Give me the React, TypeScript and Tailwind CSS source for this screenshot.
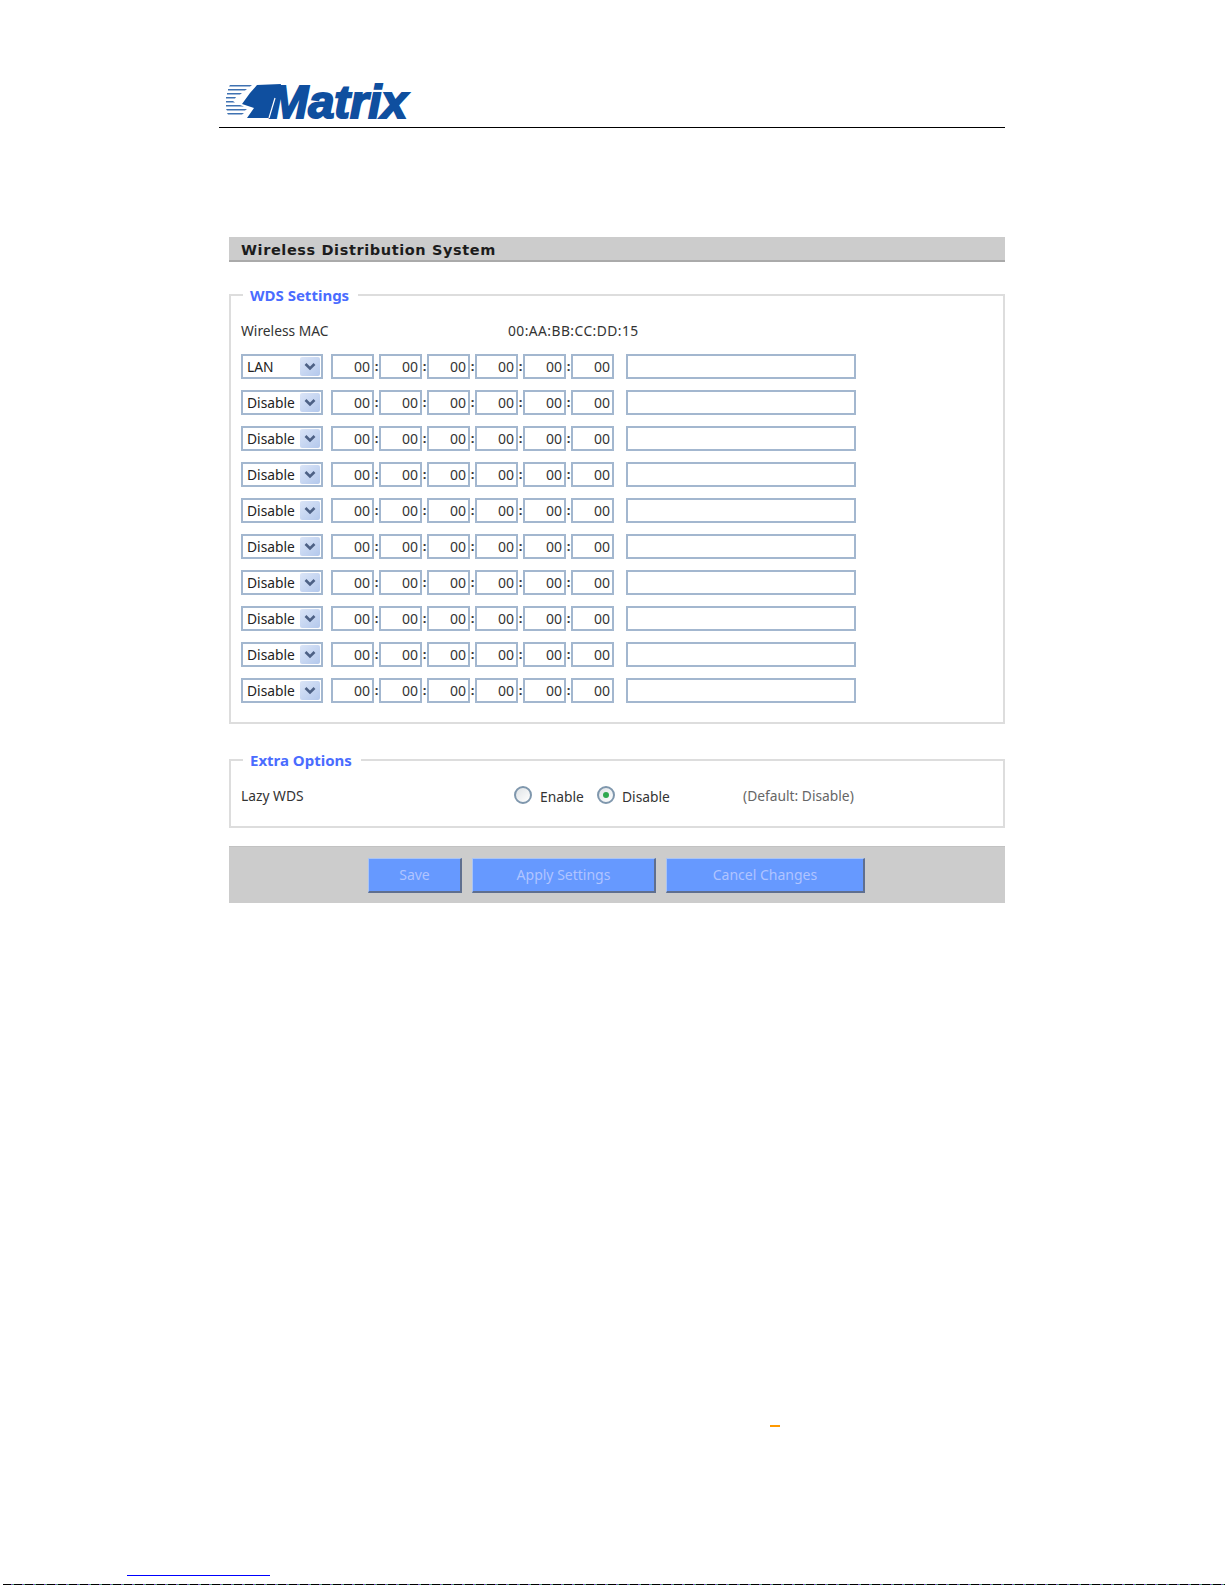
const ui = '"Noto Sans", "Liberation Sans", sans-serif';
const rows = ['LAN', 'Disable', 'Disable', 'Disable', 'Disable', 'Disable', 'Disable', 'Disable', 'Disable', 'Disable'];
const octets = [0, 1, 2, 3, 4, 5];

function Logo() {
  return (
    <svg width="200" height="60" viewBox="0 -20 200 60" className="block">
      <g fill="#0f4f9f">
        <path d="M5 4H27L25 5.5H4ZM3 8H22L20 9.5H3ZM2 12H17L15 13.5H2ZM1 16H11L10 17.5H1ZM1 20H8L10 21.5H1ZM1 24H15L19 25.5H1ZM1 28H22L20 29.5H2ZM2 32H19L17 33.5H3Z" opacity="0.8" />
        <path d="M32 4L56 3L48 37H22L29 27L17 23L25 12Z" />
        <text x="44" y="37" fontFamily='"Liberation Sans", sans-serif' fontWeight="700" fontStyle="italic" fontSize="47" stroke="#0f4f9f" strokeWidth="2">Matrix</text>
      </g>
      <path d="M44 37L50 17" stroke="#ffffff" strokeWidth="1.2" fill="none" />
    </svg>
  );
}

function Select({ label }: { label: string }) {
  return (
    <div className="w-[82px] h-[25px] border-2 border-[#a3b7cf] bg-white flex items-center justify-between pl-[4px] pr-[1px] text-[13.8px] text-[#222]">
      <span className="pt-[2px]">{label}</span>
      <span className="w-[20px] h-[19px] rounded-[2px] bg-gradient-to-br from-[#dbe5f7] to-[#b3c8ec] flex items-center justify-center">
        <svg width="12" height="9" viewBox="0 0 12 9">
          <path d="M1.5 2L6 6.5L10.5 2" fill="none" stroke="#4d6185" strokeWidth="2.6" />
        </svg>
      </span>
    </div>
  );
}

function Field({ className, value }: { className: string; value: string }) {
  return <input readOnly value={value} className={className} />;
}

function Radio({ checked }: { checked?: boolean }) {
  return (
    <span className="mb-[2px] w-[18px] h-[18px] rounded-full border-2 border-[#7f97ad] bg-gradient-to-br from-[#dfe3e6] to-white flex items-center justify-center">
      {checked && <span className="w-[6px] h-[6px] rounded-full bg-[#2fa84f]" />}
    </span>
  );
}

function Legend({ children }: { children: string }) {
  return <legend className="ml-[2px] pl-[7px] pr-[9px] h-[20px] leading-[20px] text-[15px] font-bold text-[#4a6cff]">{children}</legend>;
}

function Button({ className, children }: { className: string; children: string }) {
  return (
    <button className={`h-[35px] pb-[2px] bg-[#6699ff] border border-t-[#a9c4f5] border-l-[#a9c4f5] border-r-[#5f6f8f] border-b-[#5f6f8f] border-b-2 border-r-2 text-[14px] text-[#b0c4ff] ${className}`}>
      {children}
    </button>
  );
}

export default function App() {
  return (
    <div className="w-[1225px] h-[1585px] bg-white flex flex-col overflow-hidden" style={{ fontFamily: ui }}>
      <header className="shrink-0 ml-[219px] w-[786px] h-[128px] border-b border-black flex items-end pl-[6px] pb-[6px]">
        <Logo />
      </header>

      <main className="shrink-0 ml-[229px] w-[776px] mt-[109px] flex flex-col">
        <h1 className="h-[25px] bg-[#cccccc] border-b-2 border-[#aaaaaa] pl-[12px] pt-[2px] leading-[23px] text-[14.5px] font-bold tracking-[0.6px] text-[#1c1c1c]" style={{ fontFamily: '"DejaVu Sans", sans-serif' }}>
          Wireless Distribution System
        </h1>

        <fieldset className="mt-[23px] border-2 border-[#dddddd] pl-[10px] pt-[16px] pb-[19px]">
          <Legend>WDS Settings</Legend>
          <div className="flex items-center h-[20px] text-[13.8px] text-[#333]">
            <span className="w-[267px]">Wireless MAC</span>
            <span className="tracking-[0.45px]">00:AA:BB:CC:DD:15</span>
          </div>
          <div className="mt-[13px] flex flex-col gap-[11px]">
            {rows.map((label, r) => (
              <div key={r} className="flex items-center h-[25px]">
                <Select label={label} />
                <div className="ml-[8px] flex items-center">
                  {octets.map((o) => (
                    <div key={o} className="flex items-center">
                      <Field value="00" className="w-[43px] h-[25px] border-2 border-[#a3b7cf] text-right pr-[2px] text-[14px] text-[#333] outline-none" />
                      {o < 5 && <span className="w-[5px] text-center text-[13px] font-bold text-[#333]">:</span>}
                    </div>
                  ))}
                </div>
                <Field value="" className="ml-[12px] w-[230px] h-[25px] border-2 border-[#a3b7cf] outline-none" />
              </div>
            ))}
          </div>
        </fieldset>

        <fieldset className="mt-[26px] h-[78px] border-2 border-[#dddddd] pl-[10px] pt-[16px]">
          <Legend>Extra Options</Legend>
          <div className="flex items-center h-[20px] text-[13.8px] text-[#333]">
            <span className="w-[273px]">Lazy WDS</span>
            <Radio />
            <span className="ml-[8px] w-[57px] pt-[2px]">Enable</span>
            <Radio checked />
            <span className="ml-[7px] w-[121px] pt-[2px]">Disable</span>
            <span className="text-[#666]">(Default: Disable)</span>
          </div>
        </fieldset>

        <div className="mt-[18px] h-[57px] bg-[#cccccc] border-t border-[#c2c2c2] flex items-start pt-[11px] pl-[139px]">
          <Button className="w-[94px]">Save</Button>
          <Button className="ml-[10px] w-[184px]">Apply Settings</Button>
          <Button className="ml-[10px] w-[199px]">Cancel Changes</Button>
        </div>
      </main>

      <div className="shrink-0 ml-[770px] mt-[522px] w-[10px] h-[2px] bg-[#ff9900]" />
      <div className="shrink-0 ml-[127px] mt-[148px] w-[143px] h-[1px] bg-[#0000ff]" />
      <div className="shrink-0 ml-[3px] mt-[8px] h-[1px] bg-[repeating-linear-gradient(90deg,#000000_0px,#000000_8px,#8a2be2_8px,#2fbf4f_11px)]" />
    </div>
  );
}
